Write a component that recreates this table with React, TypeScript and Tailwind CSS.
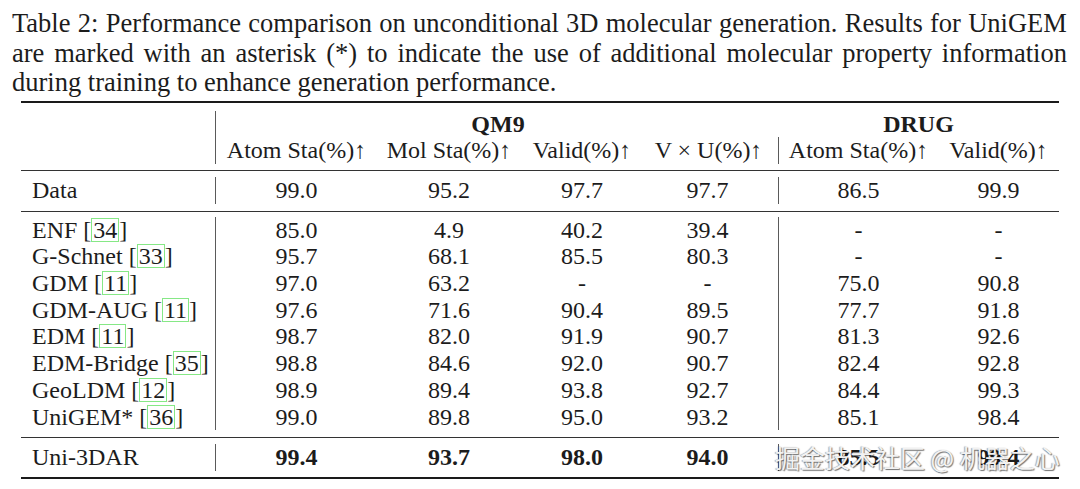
const line1 = 'Table 2: Performance comparison on unconditional 3D molecular generation. Results for UniGEM';
const line2 = 'are marked with an asterisk (*) to indicate the use of additional molecular property information';
const line3 = 'during training to enhance generation performance.';

type Row = { name: string; cite?: string; vals: string[]; bold?: boolean };

const rows: Row[] = [
  { name: 'ENF', cite: '34', vals: ['85.0', '4.9', '40.2', '39.4', '-', '-'] },
  { name: 'G-Schnet', cite: '33', vals: ['95.7', '68.1', '85.5', '80.3', '-', '-'] },
  { name: 'GDM', cite: '11', vals: ['97.0', '63.2', '-', '-', '75.0', '90.8'] },
  { name: 'GDM-AUG', cite: '11', vals: ['97.6', '71.6', '90.4', '89.5', '77.7', '91.8'] },
  { name: 'EDM', cite: '11', vals: ['98.7', '82.0', '91.9', '90.7', '81.3', '92.6'] },
  { name: 'EDM-Bridge', cite: '35', vals: ['98.8', '84.6', '92.0', '90.7', '82.4', '92.8'] },
  { name: 'GeoLDM', cite: '12', vals: ['98.9', '89.4', '93.8', '92.7', '84.4', '99.3'] },
  { name: 'UniGEM*', cite: '36', vals: ['99.0', '89.8', '95.0', '93.2', '85.1', '98.4'] },
];

const dataRow: Row = { name: 'Data', vals: ['99.0', '95.2', '97.7', '97.7', '86.5', '99.9'] };
const oursRow: Row = { name: 'Uni-3DAR', vals: ['99.4', '93.7', '98.0', '94.0', '85.5', '99.4'], bold: true };

const grid = 'grid grid-cols-[194px_162px_144px_122px_135px_160px_121px] leading-[26.7px]';

// per column cell classes (index 0..5 = number columns)
const colCls = [
  'border-l border-[#5a5a5a] text-center',
  'text-center',
  'text-center',
  'text-center pr-[6px]',
  'border-l border-[#5a5a5a] text-center',
  'text-center',
];

function CaptionLine({ text }: { text: string }) {
  return (
    <div className="flex justify-between">
      {text.split(' ').map((w, i) => (
        <span key={i}>{w}</span>
      ))}
    </div>
  );
}

function Cite({ n }: { n: string }) {
  return (
    <>
      {' '}[<span className="inline-block border border-[#86e886] px-[1px] leading-[22px]">{n}</span>]
    </>
  );
}

function TableRow({ row }: { row: Row }) {
  return (
    <>
      <div className="pl-[11px] whitespace-nowrap">
        {row.name}
        {row.cite && <Cite n={row.cite} />}
      </div>
      {row.vals.map((v, i) => (
        <div key={i} className={`${colCls[i]} ${row.bold ? 'font-bold' : ''}`}>
          {v}
        </div>
      ))}
    </>
  );
}

export default function App() {
  return (
    <div className="relative w-[1080px] h-[489px] bg-white text-[#1c1c1c] font-['Liberation_Serif',serif] overflow-hidden">
      <div className="pl-[12px] pr-[13px] pt-[9px] text-[26.5px] leading-[29.5px]">
        <CaptionLine text={line1} />
        <CaptionLine text={line2} />
        <div>{line3}</div>
      </div>

      <div className="mt-[3px] ml-[21px] w-[1038px] text-[24px]">
        {/* header */}
        <div className="border-t-2 border-[#1a1a1a] pt-[8px] pb-[6px]">
          <div className={grid}>
            <div />
            <div className="col-span-4 border-l border-[#5a5a5a] text-center pl-[2px] font-bold">QM9</div>
            <div className="col-span-2 text-center font-bold">DRUG</div>
            <div />
            <div className="border-l border-[#5a5a5a] text-center whitespace-nowrap">Atom Sta(%)↑</div>
            <div className="text-center whitespace-nowrap">Mol Sta(%)↑</div>
            <div className="text-center whitespace-nowrap">Valid(%)↑</div>
            <div className="text-center whitespace-nowrap pr-[4px]">V × U(%)↑</div>
            <div className="border-l border-[#5a5a5a] text-center whitespace-nowrap">Atom Sta(%)↑</div>
            <div className="text-center whitespace-nowrap">Valid(%)↑</div>
          </div>
        </div>

        {/* data */}
        <div className="border-t border-[#333] pt-[6px] pb-[7px]">
          <div className={grid}>
            <TableRow row={dataRow} />
          </div>
        </div>

        {/* baselines */}
        <div className="border-t border-[#333] pt-[5px] pb-[7px]">
          <div className={grid}>
            {rows.map((r) => (
              <TableRow key={r.name} row={r} />
            ))}
          </div>
        </div>

        {/* ours */}
        <div className="border-t border-[#333] pt-[6px] pb-[6px] border-b-2 border-b-[#1a1a1a]">
          <div className={grid}>
            <TableRow row={oursRow} />
          </div>
        </div>
      </div>

      {/* watermark */}
      <div className="absolute left-[775px] top-[442px] whitespace-nowrap text-[25px] leading-[30px] text-[#f2f2f2] font-['Noto_Sans_CJK_SC',sans-serif] [text-shadow:1px_1px_1px_rgba(0,0,0,0.55),-1px_0_1px_rgba(0,0,0,0.35)]">
        掘金技术社区 @ 机器之心
      </div>
    </div>
  );
}
